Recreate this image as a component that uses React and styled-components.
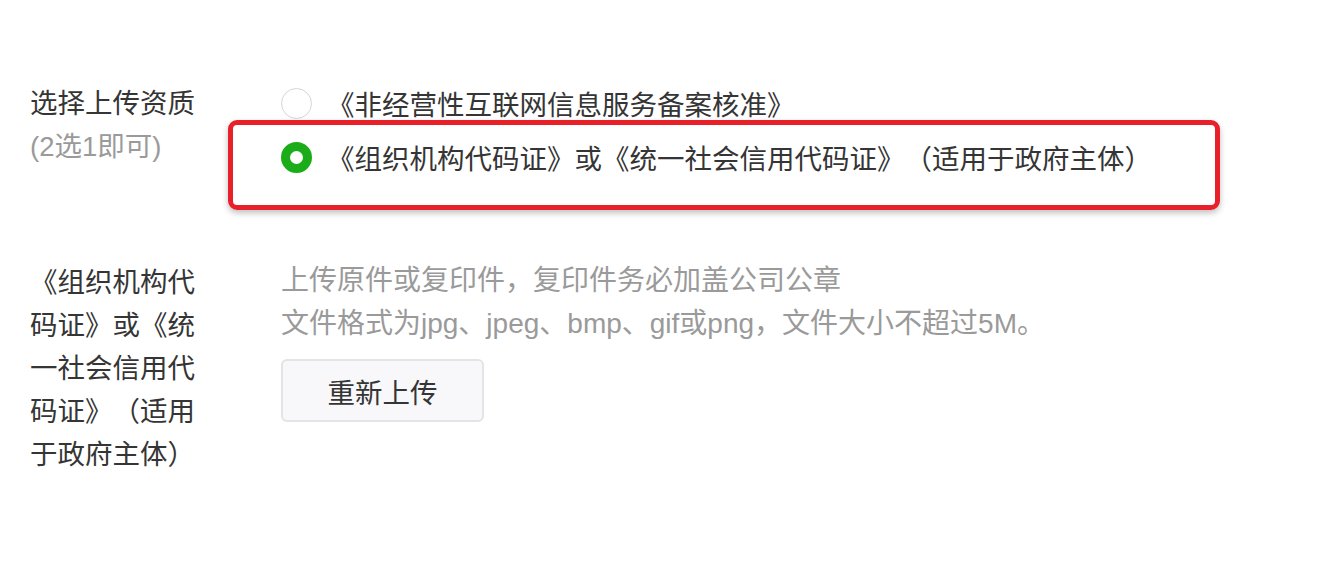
import React, { useState } from 'react';
import styled, { createGlobalStyle } from 'styled-components';

const colors = {
  text: '#353535',
  label: '#353535',
  muted: '#9a9a9a',
  green: '#1aad19',
  radioBorder: '#d5d5d5',
  highlight: '#e8202a',
  buttonBg: '#f8f8fa',
  buttonBorder: '#e3e4e6'
};

const GlobalStyle = createGlobalStyle`
  html, body {
    margin: 0;
    padding: 0;
    background: #ffffff;
  }
  body {
    font-family: 'Liberation Sans', 'Noto Sans CJK SC', sans-serif;
    color: ${colors.text};
    overflow: hidden;
    text-spacing-trim: space-all;
  }
`;

// Page wrapper
const Page = styled.div`
  width: 1318px;
  height: 580px;
  padding: 76px 0 0 30px;
  box-sizing: border-box;
  display: flex;
  flex-direction: column;
  gap: 75px;
`;

// One form row: label column + control column
const FormRow = styled.div`
  display: flex;
  align-items: flex-start;
`;

const LabelCol = styled.div`
  width: 168px;
  flex-shrink: 0;
  margin-right: 83px;
  margin-top: ${props => props.offset || 0}px;
  font-size: 27.5px;
  line-height: 43px;
  color: ${colors.label};
  word-break: break-all;
`;

const LabelSub = styled.div`
  color: ${colors.muted};
`;

const ControlCol = styled.div`
  display: flex;
  flex-direction: column;
`;

// Radio option
const Option = styled.label`
  position: relative;
  display: flex;
  align-items: center;
  height: 54px;
  gap: 15px;
  font-size: 27.5px;
  color: ${colors.text};
  cursor: pointer;
`;

const RadioDot = styled.span`
  width: 31px;
  height: 31px;
  border-radius: 50%;
  box-sizing: border-box;
  flex-shrink: 0;
  border: ${props => props.checked ? `9.5px solid ${colors.green}` : `1.5px solid ${colors.radioBorder}`};
  background: #fff;
`;

// Red annotation frame drawn over the selected option
const Highlight = styled.span`
  position: absolute;
  left: -53px;
  top: -10px;
  width: 992px;
  height: 90px;
  box-sizing: border-box;
  border: 5px solid ${colors.highlight};
  border-radius: 9px;
  box-shadow: 0 3px 6px rgba(0, 0, 0, 0.25);
  pointer-events: none;
`;

const Hint = styled.div`
  font-size: 28px;
  line-height: 43px;
  color: ${colors.muted};
`;

const UploadButton = styled.button`
  margin-top: 14px;
  width: 203px;
  height: 63px;
  background: ${colors.buttonBg};
  border: 2px solid ${colors.buttonBorder};
  border-radius: 6px;
  font-family: 'Noto Sans CJK SC', sans-serif;
  font-size: 27.5px;
  color: ${colors.text};
  cursor: pointer;
  padding: 0;
`;

const options = [
  '《非经营性互联网信息服务备案核准》',
  '《组织机构代码证》或《统一社会信用代码证》（适用于政府主体）'
];

export default function App() {
  const [selected, setSelected] = useState(1);

  return (
    <>
      <GlobalStyle />
      <Page>
        <FormRow>
          <LabelCol offset={6}>
            <div>选择上传资质</div>
            <LabelSub>(2选1即可)</LabelSub>
          </LabelCol>
          <ControlCol>
            {options.map((text, i) => (
              <Option key={i} onClick={() => setSelected(i)}>
                <RadioDot checked={selected === i} />
                <span>{text}</span>
                {i === 1 && <Highlight />}
              </Option>
            ))}
          </ControlCol>
        </FormRow>

        <FormRow>
          <LabelCol offset={2}>
            《组织机构代码证》或《统一社会信用代码证》（适用于政府主体）
          </LabelCol>
          <ControlCol>
            <Hint>上传原件或复印件，复印件务必加盖公司公章</Hint>
            <Hint>文件格式为jpg、jpeg、bmp、gif或png，文件大小不超过5M。</Hint>
            <div>
              <UploadButton>重新上传</UploadButton>
            </div>
          </ControlCol>
        </FormRow>
      </Page>
    </>
  );
}
